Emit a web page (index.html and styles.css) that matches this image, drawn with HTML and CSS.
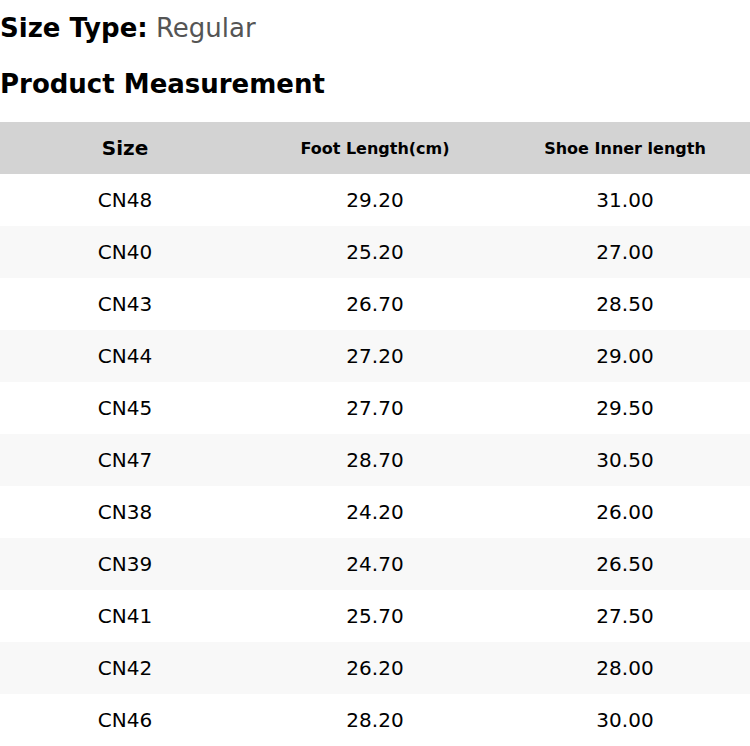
FILE: index.html
```html
<!DOCTYPE html>
<html>
<head>
<meta charset="utf-8">
<link rel="stylesheet" href="styles.css">
</head>
<body>
<div class="page">
  <div class="size-type"><span class="label">Size Type:</span> <span class="value">Regular</span></div>
  <div class="title">Product Measurement</div>
  <table class="sizes">
    <thead>
      <tr><th class="big">Size</th><th>Foot Length(cm)</th><th>Shoe Inner length</th></tr>
    </thead>
    <tbody>
      <tr><td>CN48</td><td>29.20</td><td>31.00</td></tr>
      <tr><td>CN40</td><td>25.20</td><td>27.00</td></tr>
      <tr><td>CN43</td><td>26.70</td><td>28.50</td></tr>
      <tr><td>CN44</td><td>27.20</td><td>29.00</td></tr>
      <tr><td>CN45</td><td>27.70</td><td>29.50</td></tr>
      <tr><td>CN47</td><td>28.70</td><td>30.50</td></tr>
      <tr><td>CN38</td><td>24.20</td><td>26.00</td></tr>
      <tr><td>CN39</td><td>24.70</td><td>26.50</td></tr>
      <tr><td>CN41</td><td>25.70</td><td>27.50</td></tr>
      <tr><td>CN42</td><td>26.20</td><td>28.00</td></tr>
      <tr><td>CN46</td><td>28.20</td><td>30.00</td></tr>
    </tbody>
  </table>
</div>
</body>
</html>
```
FILE: styles.css
```css
html, body {
  margin: 0;
  padding: 0;
  background: #ffffff;
}
.page {
  font-family: "DejaVu Sans", sans-serif;
  color: #000;
  width: 750px;
}
.size-type {
  font-size: 26px;
  height: 56px;
  line-height: 56px;
}
.size-type .label {
  font-weight: bold;
}
.size-type .value {
  color: #555555;
}
.title {
  font-size: 26px;
  font-weight: bold;
  height: 56px;
  line-height: 56px;
  margin-bottom: 10px;
}
.sizes {
  width: 750px;
  border-collapse: collapse;
  table-layout: fixed;
}
.sizes th {
  background: #d3d3d3;
  height: 52px;
  padding: 0;
  font-size: 16px;
  font-weight: bold;
  text-align: center;
}
.sizes th.big {
  font-size: 20px;
}
.sizes td {
  height: 52px;
  padding: 0;
  font-size: 20px;
  text-align: center;
}
.sizes tbody tr:nth-child(even) td {
  background: #f8f8f8;
}
```
